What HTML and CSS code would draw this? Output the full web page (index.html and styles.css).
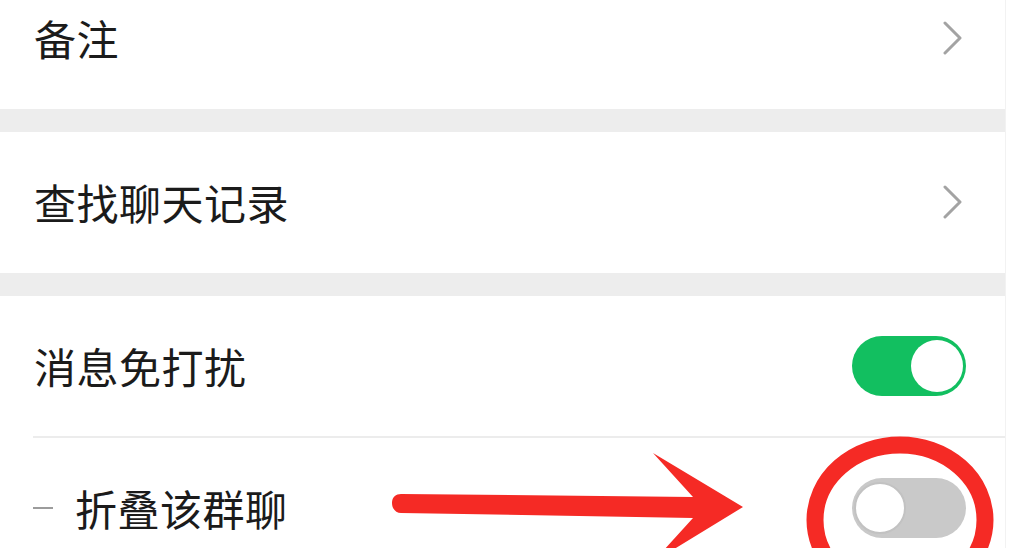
FILE: index.html
```html
<!DOCTYPE html>
<html lang="zh-CN">
<head>
<meta charset="utf-8">
<link rel="stylesheet" href="styles.css">
</head>
<body>
<div class="page">
  <div class="row row-first">
    <span class="label">备注</span>
    <svg class="chevron" width="22" height="34" viewBox="0 0 22 34"><polyline points="3,2 18,17 3,32" fill="none" stroke="#a3a3a3" stroke-width="3" stroke-linecap="round" stroke-linejoin="round"/></svg>
  </div>
  <div class="gap"></div>
  <div class="row">
    <span class="label">查找聊天记录</span>
    <svg class="chevron" width="22" height="34" viewBox="0 0 22 34"><polyline points="3,2 18,17 3,32" fill="none" stroke="#a3a3a3" stroke-width="3" stroke-linecap="round" stroke-linejoin="round"/></svg>
  </div>
  <div class="gap"></div>
  <div class="group">
    <div class="row row-line">
      <span class="label">消息免打扰</span>
      <div class="switch on"><div class="knob"></div></div>
    </div>
    <div class="row row-last">
      <span class="label"><span class="dash"></span>折叠该群聊</span>
      <div class="switch off"><div class="knob"></div></div>
    </div>
  </div>
</div>
<svg class="annot" width="1023" height="548" viewBox="0 0 1023 548">
  <path d="M392 503 C392 497 396 494 401 494 L693 497 L653 453 L743 507 L653 562 L693 518 L401 513 C396 513 392 509 392 503 Z" fill="#f52a25"/>
  <ellipse cx="900" cy="520" rx="85" ry="75" fill="none" stroke="#f52a25" stroke-width="17"/>
</svg>
</body>
</html>
```
FILE: styles.css
```css
html, body {
  margin: 0;
  padding: 0;
  background: #ffffff;
  overflow: hidden;
}
body {
  width: 1023px;
  height: 548px;
  position: relative;
  font-family: "Noto Sans CJK SC", "Noto Sans", sans-serif;
}
.page {
  width: 1005px;
  border-right: 1px solid #f2f2f2;
  height: 548px;
  overflow: hidden;
  background: #ffffff;
}
.row {
  height: 141px;
  box-sizing: border-box;
  display: flex;
  align-items: center;
  justify-content: space-between;
  padding: 0 39px 2px 34px;
  background: #ffffff;
}
.row-first {
  height: 109px;
  padding-bottom: 33px;
}
.row-line {
  height: 142px;
  position: relative;
}
.row-line::after {
  content: "";
  position: absolute;
  left: 33px;
  right: 0;
  bottom: 0;
  height: 2px;
  background: #ececec;
}
.row-last {
  height: 142px;
  padding-top: 0;
  padding-left: 33px;
  flex-shrink: 0;
}
.gap {
  height: 23px;
  background: #ededed;
}
.label {
  font-size: 42px;
  line-height: 1;
  color: #1b1b1b;
  display: flex;
  align-items: center;
  letter-spacing: 0.5px;
}
.dash {
  display: inline-block;
  width: 20px;
  height: 2px;
  background: #9c9c9c;
  margin-right: 22px;
}
.chevron {
  display: block;
  margin-right: 2px;
}
.switch {
  width: 114px;
  height: 60px;
  border-radius: 30px;
  box-sizing: border-box;
  display: flex;
  align-items: center;
  padding: 3px;
}
.switch .knob {
  width: 52px;
  height: 52px;
  border-radius: 50%;
  background: #ffffff;
  box-sizing: border-box;
}
.switch.on {
  background: #12bf60;
  justify-content: flex-end;
}
.switch.off {
  background: #c9c9c9;
  justify-content: flex-start;
  padding: 2px;
}
.switch.off .knob {
  border: 2px solid #c2c2c2;
}
.annot {
  position: absolute;
  left: 0;
  top: 0;
  pointer-events: none;
}
```
